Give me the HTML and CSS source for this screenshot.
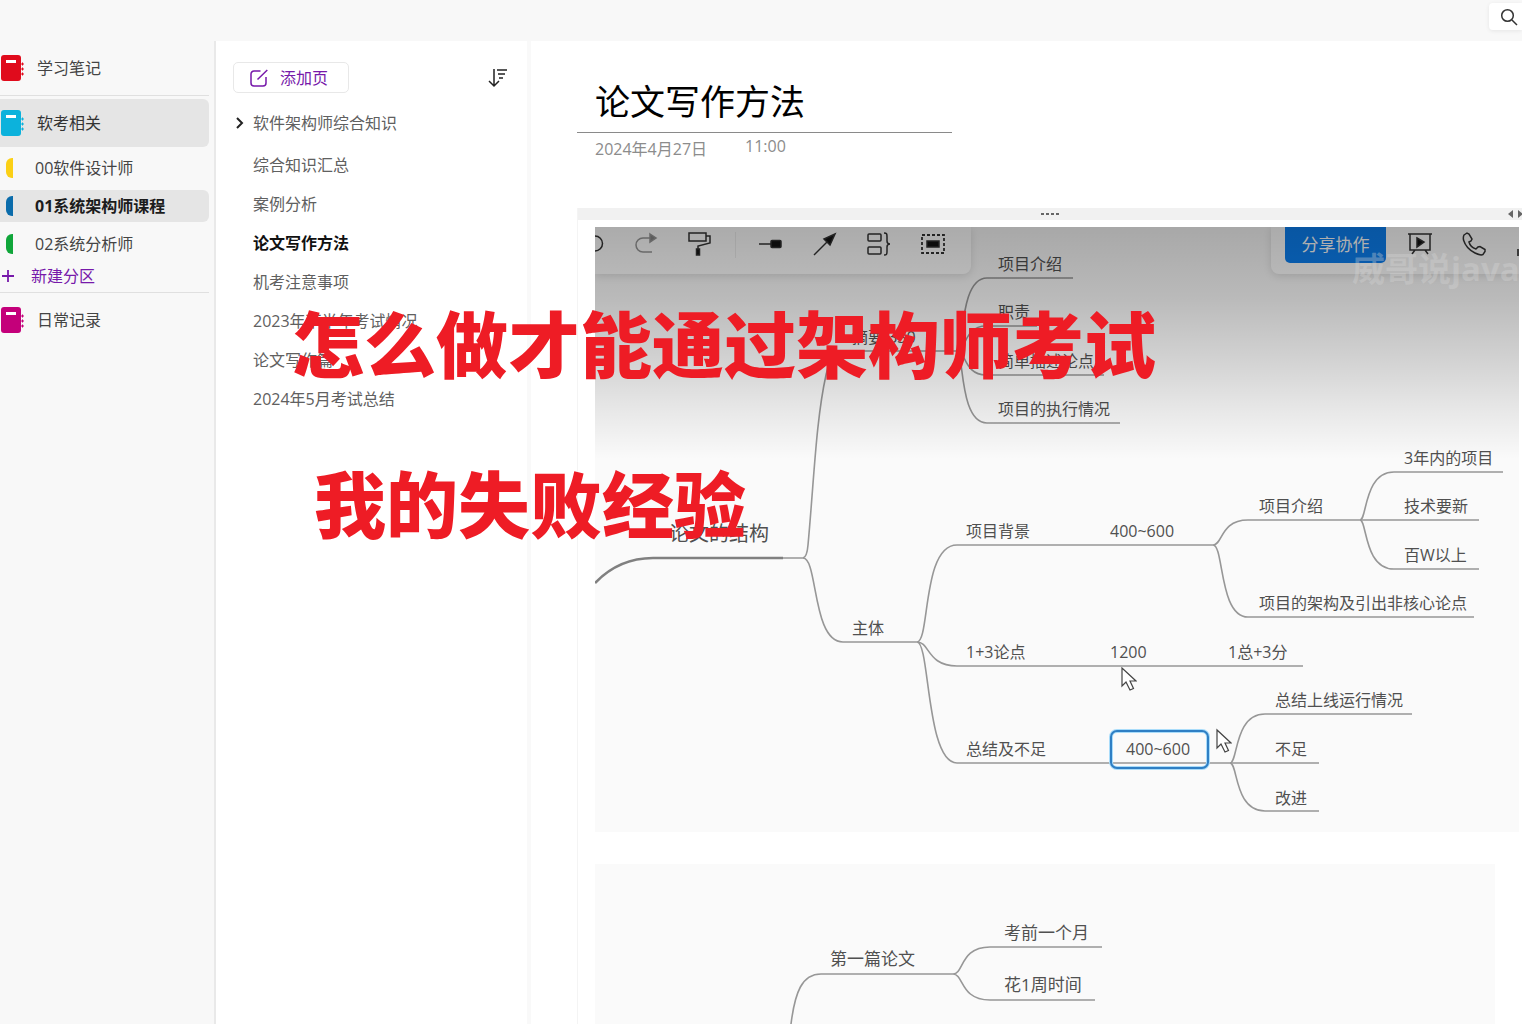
FILE: index.html
```html
<!DOCTYPE html>
<html lang="zh-CN">
<head>
<meta charset="utf-8">
<meta name="viewport" content="width=device-width, initial-scale=1">
<title>论文写作方法</title>
<link rel="stylesheet" href="styles.css">
</head>
<body>
<svg class="defs" aria-hidden="true">
  <symbol id="notebook" viewBox="0 0 24 26">
    <rect x="1" y="0" width="20" height="26" rx="3" fill="currentColor"/>
    <rect x="6" y="5" width="10" height="3" fill="#fff"/>
    <path d="M22 8h1v2h-1zM22 13h1v2h-1zM22 18h1v2h-1z" fill="currentColor" stroke="currentColor"/>
  </symbol>
  <symbol id="pointer" viewBox="0 0 16 24">
    <path d="M1 1v18l4-4 4 8 3.500-1.500-3.500-7.500h6z" fill="#fff" stroke="#444" stroke-width="1.200"/>
  </symbol>
</svg>

<div class="app">
  <header class="topbar">
    <button class="search" aria-label="搜索">
      <svg width="18" height="18" viewBox="0 0 18 18" fill="none" stroke="#333" stroke-width="1.5"><circle cx="7.500" cy="7.500" r="5.800"/><path d="M12 12l5 5"/></svg>
    </button>
  </header>

  <div class="panes">
    <nav class="notebooks" aria-label="笔记本">
      <a class="notebook red" href="#"><svg class="book"><use href="#notebook"/></svg>学习笔记</a>
      <div class="group">
        <a class="notebook cyan current" href="#"><svg class="book"><use href="#notebook"/></svg>软考相关</a>
        <ul class="sections">
          <li><a class="section yellow" href="#">00软件设计师</a></li>
          <li><a class="section blue current" href="#">01系统架构师课程</a></li>
          <li><a class="section green" href="#">02系统分析师</a></li>
        </ul>
        <button class="new-section"><svg width="14" height="14" viewBox="0 0 14 14" stroke="currentColor" stroke-width="1.800"><path d="M7 1v12M1 7h12"/></svg>新建分区</button>
      </div>
      <a class="notebook magenta" href="#"><svg class="book"><use href="#notebook"/></svg>日常记录</a>
    </nav>

    <section class="pages" aria-label="页面">
      <div class="pages-bar">
        <button class="add-page">
          <svg width="18" height="18" viewBox="0 0 18 18" fill="none" stroke="currentColor" stroke-width="1.500"><path d="M10.500 2H4a3 3 0 0 0-3 3v9a3 3 0 0 0 3 3h9a3 3 0 0 0 3-3V8M7.500 10.500L17.300 1"/></svg>添加页
        </button>
        <button class="sort" aria-label="排序">
          <svg width="20" height="20" viewBox="0 0 20 20" fill="none" stroke="#222" stroke-width="1.500"><path d="M6 1v17M1 13l5 5 5-5M9 2h10M10 6h7M11 10h4"/></svg>
        </button>
      </div>
      <ul class="page-list">
        <li class="parent"><svg class="chevron" viewBox="0 0 8 12" fill="none" stroke="#222" stroke-width="2"><path d="M1 1l5 5-5 5"/></svg><a href="#">软件架构师综合知识</a></li>
        <li><a href="#">综合知识汇总</a></li>
        <li><a href="#">案例分析</a></li>
        <li><a class="current" href="#">论文写作方法</a></li>
        <li><a href="#">机考注意事项</a></li>
        <li><a href="#">2023年下半年考试情况</a></li>
        <li><a href="#">论文写作篇</a></li>
        <li><a href="#">2024年5月考试总结</a></li>
      </ul>
    </section>

    <main class="note">
      <h1>论文写作方法</h1>
      <p class="stamp"><span>2024年4月27日</span><time>11:00</time></p>

      <div class="container">
        <div class="grip">
          <svg class="dots" viewBox="0 0 20 4"><path d="M1 1h3v2H1zM6 1h3v2H6zM11 1h3v2h-3zM16 1h3v2h-3z" fill="#666"/></svg>
          <svg class="arrows" viewBox="0 0 14 8"><path d="M5 0v8L0 4zM10 0v8l5-4z" fill="#666"/></svg>
        </div>

        <div class="board">
          <svg class="map" viewBox="595 227 924 605">
            <g class="wires">
              <path class="thick" d="M595 583Q619 558 653 558H783"/>
              <path d="M783 558H803Q807 557 808 545C814 480 816 420 826 375Q831 351 845 351H957"/>
              <path d="M803 558C818 558 812 642 843 642H917"/>
              <path d="M957 351C964 351 959 278 987 278H1073M957 351C966 351 964 326 986 326H1037M957 351C966 351 964 375 986 375H1104M957 351C964 351 959 423 987 423H1120"/>
              <path d="M917 642C930 642 922 545 957 545H1213M917 642C930 642 927 666 957 666H1303M917 642C930 642 926 763 957 763H1319"/>
              <path d="M1213 545C1223 545 1220 520 1248 520H1479M1213 545C1224 545 1219 617 1248 617H1474"/>
              <path d="M1360 520C1367 520 1364 472 1394 472H1503M1360 520C1367 520 1364 569 1394 569H1479"/>
              <path d="M1230 763C1238 763 1234 714 1265 714H1412M1230 763C1238 763 1234 811 1265 811H1319"/>
            </g>
            <rect class="halo" x="1111" y="731" width="97" height="37" rx="6"/>
            <rect class="selected" x="1111" y="731" width="97" height="37" rx="6"/>
            <g class="labels">
              <text class="root" x="669" y="541">论文的结构</text>
              <text x="852" y="343">摘要 330</text>
              <text x="998" y="270">项目介绍</text>
              <text x="998" y="318">职责</text>
              <text x="998" y="367">简单描述论点</text>
              <text x="998" y="415">项目的执行情况</text>
              <text x="852" y="634">主体</text>
              <text x="966" y="537">项目背景</text>
              <text x="1110" y="537">400~600</text>
              <text x="1259" y="512">项目介绍</text>
              <text x="1404" y="464">3年内的项目</text>
              <text x="1404" y="512">技术要新</text>
              <text x="1404" y="561">百W以上</text>
              <text x="1259" y="609">项目的架构及引出非核心论点</text>
              <text x="966" y="658">1+3论点</text>
              <text x="1110" y="658">1200</text>
              <text x="1228" y="658">1总+3分</text>
              <text x="966" y="755">总结及不足</text>
              <text x="1126" y="755">400~600</text>
              <text x="1275" y="706">总结上线运行情况</text>
              <text x="1275" y="755">不足</text>
              <text x="1275" y="804">改进</text>
            </g>
            <use href="#pointer" x="1121" y="667" width="16" height="24"/>
            <use href="#pointer" x="1216" y="728" width="16" height="26"/>
          </svg>

          <div class="tools">
            <button class="undo" aria-label="撤销"><svg viewBox="0 0 24 24"><path d="M-8 4H0a7 7 0 0 1 0 15h-6"/></svg></button>
            <button class="redo" aria-label="重做"><svg viewBox="0 0 24 24"><path d="M17 6H9a7 7 0 0 0 0 14h9"/><path class="solid" d="M16 2l6 4-6 4z"/></svg></button>
            <button aria-label="格式刷"><svg viewBox="0 0 24 24"><path d="M1 1h17v8H1zM18 4h4v7l-12 3v3"/><path class="solid" d="M8.500 17h3v6h-3z"/></svg></button>
            <i class="rule"></i>
            <button aria-label="节点"><svg viewBox="0 0 24 24"><path d="M0 12h12"/><rect class="solid" x="12" y="8.500" width="10" height="7" rx="1"/></svg></button>
            <button aria-label="关系线"><svg viewBox="0 0 24 24"><path d="M1 23L16 8"/><path class="solid" d="M22 2L11 7l6 6z"/></svg></button>
            <button aria-label="概要"><svg viewBox="0 0 24 24"><rect x="1" y="2" width="13" height="7" rx="1"/><rect x="1" y="15" width="13" height="7" rx="1"/><path d="M17 1c3 0 3 1 3 4v4c0 2 1 3 3 3-2 0-3 1-3 3v4c0 3 0 4-3 4"/></svg></button>
            <button aria-label="外框"><svg viewBox="0 0 24 24"><rect x="1" y="3" width="22" height="18" stroke-dasharray="3 2" stroke-width="1.800"/><rect class="solid" x="6" y="9" width="12" height="6"/></svg></button>
          </div>

          <div class="share-bar">
            <button class="share">分享协作</button>
            <button aria-label="演示"><svg viewBox="0 0 24 24"><path d="M0 2h24M2 2v16h20V2M7 18l-3 4M17 18l3 4"/><path class="solid" d="M9 6l7 4-7 5z"/></svg></button>
            <button aria-label="通话"><svg viewBox="0 0 24 24"><path d="M2 3l3-2 2 1 3 5-1 2-2 1c1 4 4 6 7 7l2-2 2-.5 5 3v2l-2 3c-2 1-5 0-8-1.500C7 18 3 13 1.500 8Q1 5 2 3z"/></svg></button>
            <i class="edge"></i>
          </div>
          <div class="shade"></div>
          <span class="watermark">威哥说java</span>
        </div>

        <div class="board second">
          <svg class="map" viewBox="595 864 900 300">
            <g class="wires">
              <path d="M791 1024C795 992 802 974 821 974H953M953 974C964 974 960 947 990 947H1102M953 974C964 974 960 1000 990 1000H1095"/>
            </g>
            <g class="labels large">
              <text x="830" y="965">第一篇论文</text>
              <text x="1004" y="939">考前一个月</text>
              <text x="1004" y="991">花1周时间</text>
            </g>
          </svg>
        </div>
      </div>
    </main>
  </div>

  <div class="headline"><p>怎么做才能通过架构师考试</p><p class="sub">我的失败经验</p></div>
</div>
</body>
</html>
```

FILE: styles.css
```css
* { box-sizing: border-box; }
body {
  margin: 0;
  background: #fff;
  color: #444;
  font: 16px/24px "Open Sans", "Noto Sans CJK SC", sans-serif;
}
h1, p, ul { margin: 0; padding: 0; }
ul { list-style: none; }
a { color: inherit; text-decoration: none; }
button {
  margin: 0;
  padding: 0;
  border: 0;
  background: none;
  color: inherit;
  font: inherit;
}
svg { display: block; flex: none; }
.defs { position: absolute; width: 0; height: 0; }

.app {
  position: relative;
  display: flex;
  flex-direction: column;
  height: 100vh;
  overflow: hidden;
}
.topbar {
  display: flex;
  flex: none;
  justify-content: flex-end;
  align-items: flex-start;
  height: 41px;
  padding-top: 3px;
  background: #f8f8f8;
}
.search {
  display: flex;
  align-items: center;
  width: 33px;
  height: 27px;
  padding-left: 11px;
  border-radius: 4px 0 0 4px;
  background: #fff;
  box-shadow: 0 1px 4px rgba(0, 0, 0, .08);
}
.panes { display: flex; flex: 1; min-height: 0; }

/* Notebook tree */
.notebooks {
  flex: none;
  width: 216px;
  padding-right: 5px;
  border-right: 2px solid #e9e9e9;
  background: #f8f8f8;
}
.notebook {
  display: flex;
  align-items: center;
  gap: 13px;
  height: 54px;
}
.notebook.current { height: 48px; border-radius: 0 6px 6px 0; background: #e5e5e5; color: #333; }
.book { width: 24px; height: 26px; }
.red .book { color: #e00b1c; }
.cyan .book { color: #0cb2dc; }
.magenta .book { color: #c4007a; }
.group {
  padding: 3px 0;
  border-top: 1px solid #e0e0e0;
  border-bottom: 1px solid #e0e0e0;
}
.sections { padding-top: 2px; }
.sections li { padding: 3px 0; }
.section {
  display: flex;
  align-items: center;
  gap: 22px;
  height: 32px;
  padding-left: 6px;
  border-radius: 0 6px 6px 0;
}
.section::before {
  content: "";
  width: 7px;
  height: 20px;
  border-radius: 6px 0 0 6px;
  background: currentColor;
}
.section.current { background: #e5e5e5; color: #1c1c1c; font-weight: 700; }
.yellow::before { background: #fbd016; }
.blue::before { background: #0b6cab; }
.green::before { background: #10a63a; }
.new-section {
  display: flex;
  align-items: center;
  gap: 16px;
  height: 26px;
  padding-left: 1px;
  color: #7719aa;
}

/* Page list */
.pages { flex: none; width: 315px; padding: 21px 19px 0 17px; border-right: 4px solid #f9f9f9; }
.pages-bar { display: flex; justify-content: space-between; align-items: center; margin-bottom: 8px; }
.add-page {
  display: flex;
  align-items: center;
  gap: 12px;
  height: 31px;
  padding: 0 20px 0 16px;
  border: 1px solid #e8e8e8;
  border-radius: 5px;
  color: #7719aa;
}
.page-list { padding-left: 20px; color: #606060; }
.page-list li { height: 39px; line-height: 40px; white-space: nowrap; }
.page-list .parent { position: relative; height: 44px; line-height: 44px; }
.page-list .current { color: #111; font-weight: 700; }
.chevron { position: absolute; left: -17px; top: 16px; width: 8px; height: 12px; }

/* Note body */
.note { flex: 1; min-width: 0; padding-left: 46px; }
.note h1 {
  width: 375px;
  margin-top: 31px;
  padding-left: 18px;
  border-bottom: 1px solid #8a8a8a;
  color: #000;
  font-size: 35px;
  font-weight: 400;
  line-height: 60px;
}
.stamp {
  display: flex;
  gap: 38px;
  padding: 0 18px 1px;
  color: #8c8c8c;
  line-height: 32px;
}
.stamp time { line-height: 26px; }
.container { margin-top: 42px; border-left: 1px solid #f4f4f4; }
.grip {
  display: grid;
  grid-template-columns: 1fr auto 1fr;
  align-items: center;
  height: 12px;
  background: #f1f1f1;
}
.dots { grid-column: 2; width: 20px; height: 4px; }
.arrows { justify-self: end; width: 14px; height: 8px; }
.board {
  position: relative;
  margin: 7px 3px 0 17px;
  overflow: hidden;
  background: #fafafa;
}
.second { margin: 32px 27px 0 17px; }
.map { width: 100%; height: auto; }
.wires { fill: none; stroke: #979797; stroke-width: 1.6; }
.wires .thick { stroke: #808080; stroke-width: 2.6; }
.labels { fill: #505050; font-size: 16px; }
.labels .root { font-size: 20px; }
.large { font-size: 17px; }
.halo, .selected { fill: none; stroke: #a9dcfa; stroke-width: 4; }
.selected { stroke: #2f7fc4; stroke-width: 2; }

/* Floating tool panels of the mind map */
.tools, .share-bar {
  position: absolute;
  top: 0;
  display: flex;
  height: 47px;
  background: #fff;
  box-shadow: 0 2px 8px rgba(0, 0, 0, .12);
}
.tools { left: 0; padding-right: 11px; border-radius: 0 0 8px 0; }
.share-bar { right: 0; padding-left: 14px; border-radius: 0 0 0 8px; }
.tools button, .share-bar button { display: flex; justify-content: center; width: 54px; height: 36px; padding-top: 5px; }
.tools svg, .share-bar svg {
  width: 24px;
  height: 24px;
  fill: none;
  stroke: #333;
  stroke-width: 1.5;
}
.tools .solid, .share-bar .solid { fill: #111; }
.tools .undo { width: 24px; }
.redo { opacity: .5; }
.rule { width: 1px; height: 26px; margin: 5px 8px; background: #eee; }
.share-bar .share {
  width: 101px;
  margin-right: 7px;
  padding: 0;
  align-items: center;
  border-radius: 0 0 5px 5px;
  background: #0c80f2;
  color: #fff;
  font-size: 17px;
}
.edge { width: 2px; height: 7px; margin: 22px 0 0 16px; background: #555; }
.shade {
  position: absolute;
  inset: 0 0 auto;
  height: 232px;
  background: linear-gradient(rgba(0, 0, 0, .33), rgba(0, 0, 0, .26) 30%, rgba(0, 0, 0, .17) 55%, rgba(0, 0, 0, .08) 78%, transparent);
  pointer-events: none;
}
.watermark {
  position: absolute;
  top: 22px;
  left: 757px;
  color: rgba(215, 215, 215, .35);
  font-size: 33px;
  font-weight: 700;
  line-height: 40px;
  white-space: nowrap;
}

/* Caption laid over the whole window */
.headline {
  position: absolute;
  left: 292px;
  top: 264px;
  color: #ee1c25;
  font-size: 72px;
  font-weight: 900;
  line-height: 160px;
  white-space: nowrap;
  pointer-events: none;
}
.sub { padding-left: 22px; }
```
